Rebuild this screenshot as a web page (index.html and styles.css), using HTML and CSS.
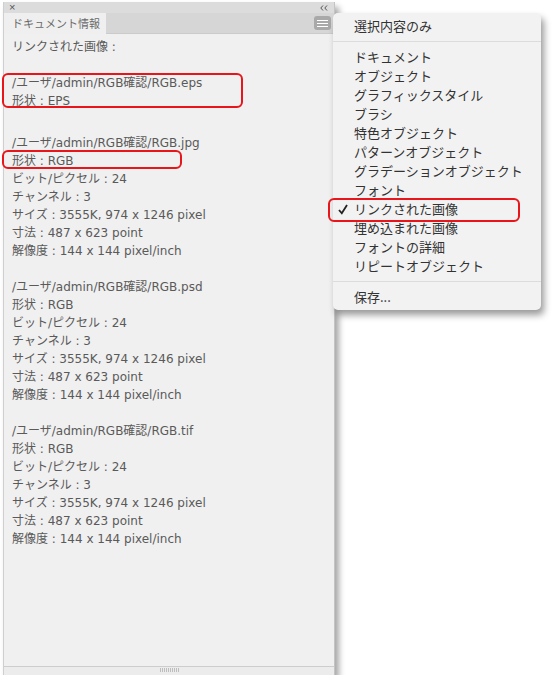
FILE: index.html
```html
<!DOCTYPE html>
<html lang="ja">
<head>
    <meta charset="UTF-8">
    <meta name="viewport" content="width=device-width, initial-scale=1.0">
    <title>ドキュメント情報</title>
    <link rel="stylesheet" href="styles.css">
</head>
<body>
    <div class="panel">
        <div class="titlebar">
            <span class="close">×</span>
            <svg class="collapse" width="8" height="6" viewBox="0 0 8 6">
                <path d="M3 0.5 L0.8 3 L3 5.5 M7 0.5 L4.8 3 L7 5.5" fill="none" stroke="#555" stroke-width="1"/>
            </svg>
        </div>
        <div class="tabrow">
            <div class="tab">ドキュメント情報</div>
            <div class="menu-btn"><span></span><span></span><span></span></div>
        </div>
        <div class="info">
            <p>リンクされた画像 :</p>
            <p>&nbsp;</p>
            <div class="block mark mark-eps">
                <p>/ユーザ/admin/RGB確認/RGB.eps</p>
                <p>形状 : EPS</p>
            </div>
            <div class="block first">
                <p>/ユーザ/admin/RGB確認/RGB.jpg</p>
                <p class="mark mark-rgb">形状 : RGB</p>
                <p>ビット/ピクセル : 24</p>
                <p>チャンネル : 3</p>
                <p>サイズ : 3555K, 974 x 1246 pixel</p>
                <p>寸法 : 487 x 623 point</p>
                <p>解像度 : 144 x 144 pixel/inch</p>
            </div>
            <div class="block">
                <p>/ユーザ/admin/RGB確認/RGB.psd</p>
                <p>形状 : RGB</p>
                <p>ビット/ピクセル : 24</p>
                <p>チャンネル : 3</p>
                <p>サイズ : 3555K, 974 x 1246 pixel</p>
                <p>寸法 : 487 x 623 point</p>
                <p>解像度 : 144 x 144 pixel/inch</p>
            </div>
            <div class="block">
                <p>/ユーザ/admin/RGB確認/RGB.tif</p>
                <p>形状 : RGB</p>
                <p>ビット/ピクセル : 24</p>
                <p>チャンネル : 3</p>
                <p>サイズ : 3555K, 974 x 1246 pixel</p>
                <p>寸法 : 487 x 623 point</p>
                <p>解像度 : 144 x 144 pixel/inch</p>
            </div>
        </div>
        <div class="footer"><div class="grip"></div></div>
    </div>

    <ul class="menu">
        <li>選択内容のみ</li>
        <li class="sep"></li>
        <li>ドキュメント</li>
        <li>オブジェクト</li>
        <li>グラフィックスタイル</li>
        <li>ブラシ</li>
        <li>特色オブジェクト</li>
        <li>パターンオブジェクト</li>
        <li>グラデーションオブジェクト</li>
        <li>フォント</li>
        <li class="checked mark mark-menu">
            <svg class="check" width="10" height="11" viewBox="0 0 10 11">
                <path d="M1 6 L3.8 9.3 L9 1" fill="none" stroke="#222" stroke-width="1.8"/>
            </svg>リンクされた画像</li>
        <li>埋め込まれた画像</li>
        <li>フォントの詳細</li>
        <li>リピートオブジェクト</li>
        <li class="sep"></li>
        <li>保存...</li>
    </ul>
</body>
</html>
```

FILE: styles.css
```css
body {
    margin: 0;
    background: #fff;
    font-family: "DejaVu Sans", "Noto Sans CJK JP", sans-serif;
}

.panel {
    margin: 2px 0 0 3px;
    width: 330px;
    height: 673px;
    display: flex;
    flex-direction: column;
    background: #f0f0f0;
    border-left: 1px solid #cfcfcf;
    border-right: 1px solid #c4c4c4;
    box-shadow: 4px 5px 6px rgba(0, 0, 0, 0.35);
}

.titlebar {
    height: 11px;
    background: #dcdcdc;
    display: flex;
    justify-content: space-between;
    align-items: center;
    padding: 0 6px 0 5px;
    color: #555;
    font-family: "Liberation Sans", sans-serif;
    font-size: 11px;
    line-height: 11px;
}

.tabrow {
    height: 20px;
    background: #d6d6d6;
    display: flex;
    justify-content: space-between;
    border-bottom: 1px solid #cbcbcb;
}

.tab {
    box-sizing: border-box;
    width: 102px;
    margin-bottom: -1px;
    padding-left: 8px;
    background: #efefef;
    font-family: "Noto Sans CJK JP", sans-serif;
    font-size: 11px;
    line-height: 20px;
    color: #6a6a6a;
    white-space: nowrap;
}

.menu-btn {
    width: 17px;
    height: 14px;
    margin: 3px 3px 0 0;
    background: #a9a9a9;
    border-radius: 3px;
    display: flex;
    flex-direction: column;
    justify-content: center;
    gap: 2px;
    align-items: center;
}

.menu-btn span {
    width: 11px;
    height: 1px;
    background: #fff;
}

.info {
    flex: 1;
    padding: 4px 0 0 8px;
    color: #5a5a5a;
    font-size: 12px;
}

.info p {
    margin: 0;
    height: 18px;
    line-height: 18px;
    white-space: nowrap;
}

.block {
    margin-bottom: 18px;
}

.mark-eps {
    margin-bottom: 24px;
}

.mark {
    position: relative;
}

.mark::after {
    content: "";
    position: absolute;
    border: 2px solid #e8151b;
    border-radius: 6px;
}

.mark-eps::after {
    left: -10px;
    top: -1px;
    width: 237px;
    height: 31px;
}

.mark-rgb::after {
    left: -10px;
    top: -2px;
    width: 176px;
    height: 15px;
}

.footer {
    height: 7px;
    border-top: 1px solid #cdcdcd;
    background: #ececec;
    display: flex;
    justify-content: center;
    padding-top: 1px;
}

.grip {
    width: 19px;
    height: 4px;
    background: repeating-linear-gradient(90deg, #bdbdbd 0 1px, transparent 1px 2px);
}

.menu {
    position: absolute;
    left: 333px;
    top: 13px;
    width: 208px;
    margin: 0;
    padding: 3px 0 4px;
    list-style: none;
    background: #f2f2f2;
    border-radius: 5px;
    box-shadow: 3px 5px 7px rgba(0, 0, 0, 0.4);
    color: #333;
    font-family: "Noto Sans CJK JP", sans-serif;
    font-size: 13px;
}

.menu li {
    height: 19px;
    line-height: 19px;
    padding-left: 21px;
    white-space: nowrap;
}

.menu li.sep {
    height: 1px;
    margin: 6px 0 5px;
    padding: 0;
    background: #dcdcdc;
}

.check {
    position: absolute;
    left: 5px;
    top: 5px;
}

.mark-menu::after {
    left: -5px;
    top: -1px;
    width: 188px;
    height: 20px;
}
```
